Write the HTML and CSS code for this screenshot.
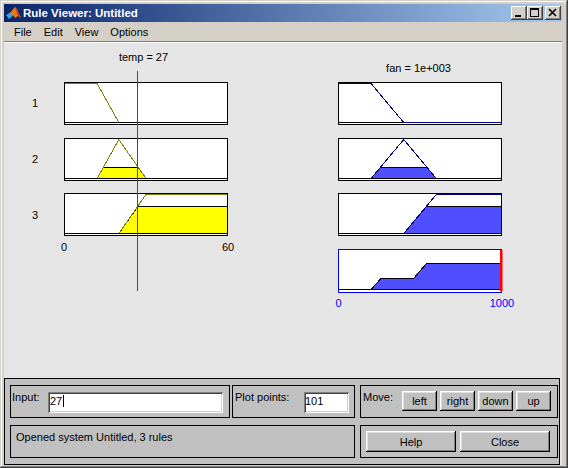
FILE: index.html
```html
<!DOCTYPE html>
<html lang="en">

<head>
    <meta charset="UTF-8">
    <title>Rule Viewer: Untitled</title>
    <link rel="stylesheet" href="styles.css">
</head>

<body>
    <div class="window">
        <div class="titlebar">
            <svg class="app-icon" width="16" height="16" viewBox="0 0 16 16">
                <polygon points="0,10 5,7 8,10 3,14" fill="#3aa0d8" />
                <polygon points="4,8 9,2 11,4 15,13 12,11 9,13 7,10" fill="#e8781c" />
                <polygon points="9,2 11,4 15,13 12,11" fill="#c8361a" />
            </svg>
            <span class="title">Rule Viewer: Untitled</span>
            <div class="caption-buttons">
                <span class="cap-btn">
                    <svg width="16" height="14"><rect x="4" y="9" width="6" height="2" fill="#000" /></svg>
                </span>
                <span class="cap-btn">
                    <svg width="16" height="14"><rect x="3.5" y="2.5" width="8" height="8" fill="none" stroke="#000" /><line x1="3" y1="3.5" x2="12" y2="3.5" stroke="#000" /></svg>
                </span>
                <span class="cap-btn close">
                    <svg width="16" height="14"><path d="M4 3 L11 10 M11 3 L4 10" stroke="#000" stroke-width="1.6" /></svg>
                </span>
            </div>
        </div>

        <div class="menubar">
            <span class="menu-item">File</span>
            <span class="menu-item">Edit</span>
            <span class="menu-item">View</span>
            <span class="menu-item">Options</span>
        </div>

        <div class="client">
            <svg class="plots" width="558" height="335" viewBox="4 43 558 335">
                <!-- input: temp, 0..60 -> 64.5..227.5 -->
                <text class="lbl" x="143.5" y="60.5">temp = 27</text>
                <text class="lbl" x="35" y="107">1</text>
                <text class="lbl" x="35" y="162.5">2</text>
                <text class="lbl" x="35" y="218.5">3</text>

                <rect class="ax" x="64.5" y="82.5" width="163" height="42" />
                <polyline class="mf-in" points="64.5,83.5 97.1,83.5 118.8,122.5 227.5,122.5" />
                <line class="base" x1="64.5" y1="122.5" x2="227.5" y2="122.5" />
                <rect class="box" x="64.5" y="82.5" width="163" height="42" />

                <rect class="ax" x="64.5" y="138.5" width="163" height="42" />
                <polygon class="fill-in" points="97.1,178.5 103.6,167 137.9,167 146,178.5" />
                <polyline class="mf-in" points="97.1,178.5 118.8,139.5 146,178.5" />
                <line class="base" x1="64.5" y1="178.5" x2="227.5" y2="178.5" />
                <rect class="box" x="64.5" y="138.5" width="163" height="42" />

                <rect class="ax" x="64.5" y="193.5" width="163" height="42" />
                <polygon class="fill-in" points="118.8,233.5 137.9,206.5 227.5,206.5 227.5,233.5" />
                <polyline class="mf-in" points="118.8,233.5 146,194.5 227.5,194.5" />
                <line class="base" x1="64.5" y1="233.5" x2="227.5" y2="233.5" />
                <rect class="box" x="64.5" y="193.5" width="163" height="42" />

                <text class="lbl" x="64" y="251">0</text>
                <text class="lbl" x="228" y="251">60</text>

                <!-- output: fan, 0..1000 -> 338.5..501.5 -->
                <text class="lbl" x="418.5" y="72">fan = 1e+003</text>

                <rect class="ax" x="338.5" y="82.5" width="163" height="42" />
                <polyline class="mf-out" points="338.5,83.5 371.1,83.5 403.7,122.5 501.5,122.5" />
                <line class="base" x1="338.5" y1="122.5" x2="403.7" y2="122.5" />
                <rect class="box" x="338.5" y="82.5" width="163" height="42" />

                <rect class="ax" x="338.5" y="138.5" width="163" height="42" />
                <polygon class="fill-out" points="371.1,178.5 380.9,167 426.5,167 436.3,178.5" />
                <polyline class="mf-out" points="371.1,178.5 403.7,139.5 436.3,178.5" />
                <line class="base" x1="338.5" y1="178.5" x2="501.5" y2="178.5" />
                <rect class="box" x="338.5" y="138.5" width="163" height="42" />

                <rect class="ax" x="338.5" y="193.5" width="163" height="42" />
                <polygon class="fill-out" points="403.7,233.5 426.5,206.5 501.5,206.5 501.5,233.5" />
                <polyline class="mf-out" points="403.7,233.5 436.3,194.5 501.5,194.5" />
                <line class="base" x1="338.5" y1="233.5" x2="501.5" y2="233.5" />
                <rect class="box" x="338.5" y="193.5" width="163" height="42" />

                <rect class="ax" x="338.5" y="249.5" width="163" height="43" />
                <line class="base" x1="338.5" y1="289.5" x2="371.1" y2="289.5" />
                <polygon class="fill-out" points="371.1,289.5 380.9,278.5 413.5,278.5 426.5,263.5 501.5,263.5 501.5,289.5" />
                <rect class="box agg" x="338.5" y="249.5" width="163" height="43" />
                <rect x="500" y="250" width="2.5" height="41" fill="#ff0000" />

                <text class="lbl out" x="338.5" y="307">0</text>
                <text class="lbl out" x="502" y="307">1000</text>

                <line class="cursor" x1="137.5" y1="71" x2="137.5" y2="291" />
            </svg>

            <div class="controls">
                <div class="row">
                    <div class="frame input-frame">
                        <span class="label">Input:</span>
                        <div class="edit input-edit">27<span class="caret"></span></div>
                    </div>
                    <div class="frame points-frame">
                        <span class="label">Plot points:</span>
                        <div class="edit points-edit">101</div>
                    </div>
                    <div class="frame move-frame">
                        <span class="label">Move:</span>
                        <div class="move-buttons">
                            <button class="btn">left</button>
                            <button class="btn">right</button>
                            <button class="btn">down</button>
                            <button class="btn">up</button>
                        </div>
                    </div>
                </div>
                <div class="row">
                    <div class="frame status-frame">Opened system Untitled, 3 rules</div>
                    <div class="frame action-frame">
                        <button class="btn wide">Help</button>
                        <button class="btn wide">Close</button>
                    </div>
                </div>
            </div>
        </div>
    </div>
</body>

</html>
```

FILE: styles.css
```css
* {
    padding: 0;
    margin: 0;
    box-sizing: border-box;
}

body {
    background: #d4d0c8;
    font-family: "Liberation Sans", Arial, sans-serif;
    font-size: 11px;
    color: #000;
}

.window {
    width: 568px;
    height: 468px;
    padding: 4px 6px 3px 4px;
    display: flex;
    flex-direction: column;
    background: #d4d0c8;
    box-shadow: inset -1px -1px #404040, inset 1px 1px #d4d0c8, inset -2px -2px #808080, inset 2px 2px #fff;
}

/* title bar */
.titlebar {
    height: 18px;
    display: flex;
    align-items: center;
    padding: 0 1px 0 2px;
    background: linear-gradient(to right, #0a246a, #a6caf0);
    color: #fff;
}

.titlebar .app-icon {
    margin-right: 1px;
}

.titlebar .title {
    flex: 1;
    font-weight: bold;
    font-size: 11.5px;
}

.caption-buttons {
    display: flex;
}

.cap-btn {
    width: 16px;
    height: 14px;
    background: #d4d0c8;
    box-shadow: inset -1px -1px #404040, inset 1px 1px #fff, inset -2px -2px #808080;
}

.cap-btn svg {
    display: block;
}

.cap-btn.close {
    margin-left: 2px;
}

/* menu */
.menubar {
    height: 20px;
    display: flex;
    padding: 1px 0 0 4px;
    line-height: 18px;
    border-bottom: 1px solid #808080;
}

.menu-item {
    padding: 0 6px;
}

.client {
    flex: 1;
    display: flex;
    flex-direction: column;
    background: #e5e5e5;
    border-top: 1px solid #fff;
}

.plots {
    display: block;
}

.plots .lbl {
    font-family: "Liberation Sans", Arial, sans-serif;
    font-size: 11px;
    text-anchor: middle;
    fill: #000;
}

.plots .lbl.out {
    fill: #0000ff;
}

.plots .ax {
    fill: #fff;
    stroke: none;
}

.plots .box {
    fill: none;
    stroke: #000;
    shape-rendering: crispEdges;
}

.plots .box.agg {
    stroke: #0000ff;
}

.plots .base {
    stroke: #000;
    shape-rendering: crispEdges;
}

.plots .mf-in {
    fill: none;
    stroke: #808000;
    shape-rendering: crispEdges;
}

.plots .mf-out {
    fill: none;
    stroke: #000080;
    shape-rendering: crispEdges;
}

.plots .fill-in {
    fill: #ffff00;
    stroke: #000;
    shape-rendering: crispEdges;
}

.plots .fill-out {
    fill: #4f4fff;
    stroke: #000;
    shape-rendering: crispEdges;
}

.plots .cursor {
    stroke: #ff0000;
    shape-rendering: crispEdges;
}

/* bottom control panel */
.controls {
    height: 87px;
    margin-right: 2px;
    padding: 6px 1px 6px 5px;
    display: flex;
    flex-direction: column;
    gap: 7px;
    background: #c0c0c0;
    border: 1px solid #000;
}

.row {
    display: flex;
    gap: 5px;
}

.frame {
    height: 33px;
    display: flex;
    align-items: flex-start;
    border: 1px solid #000;
    padding-top: 5px;
}

.frame .label {
    line-height: 13px;
}

.input-frame {
    width: 220px;
    padding-left: 1px;
    margin-right: -3px;
}

.input-frame .label {
    width: 36px;
}

.points-frame {
    width: 123px;
    padding-left: 2px;
}

.points-frame .label {
    width: 69px;
}

.move-frame {
    width: 198px;
    padding-left: 2px;
}

.move-frame .label {
    width: 39px;
}

.edit {
    height: 21px;
    margin-top: 1px;
    padding: 2px;
    line-height: 15px;
    background: #fff;
    box-shadow: inset 1px 1px #808080, inset -1px -1px #fff, inset 2px 2px #404040, inset -2px -2px #d4d0c8;
}

.input-edit {
    width: 175px;
}

.points-edit {
    width: 45px;
    padding-left: 1px;
}

.caret {
    display: inline-block;
    width: 1px;
    height: 12px;
    margin-left: 1px;
    vertical-align: -2px;
    background: #000;
}

.move-buttons {
    display: flex;
    gap: 3px;
}

.btn {
    width: 35px;
    height: 20px;
    border: none;
    font: inherit;
    color: #000;
    background: #c0c0c0;
    box-shadow: inset -1px -1px #000, inset 1px 1px #fff, inset -2px -2px #808080, inset 2px 2px #dfdfdf;
}

.status-frame {
    width: 345px;
    padding: 5px 0 0 5px;
    line-height: 13px;
}

.action-frame {
    width: 198px;
    padding-left: 5px;
    gap: 4px;
}

.btn.wide {
    width: 90px;
    height: 21px;
}
```
